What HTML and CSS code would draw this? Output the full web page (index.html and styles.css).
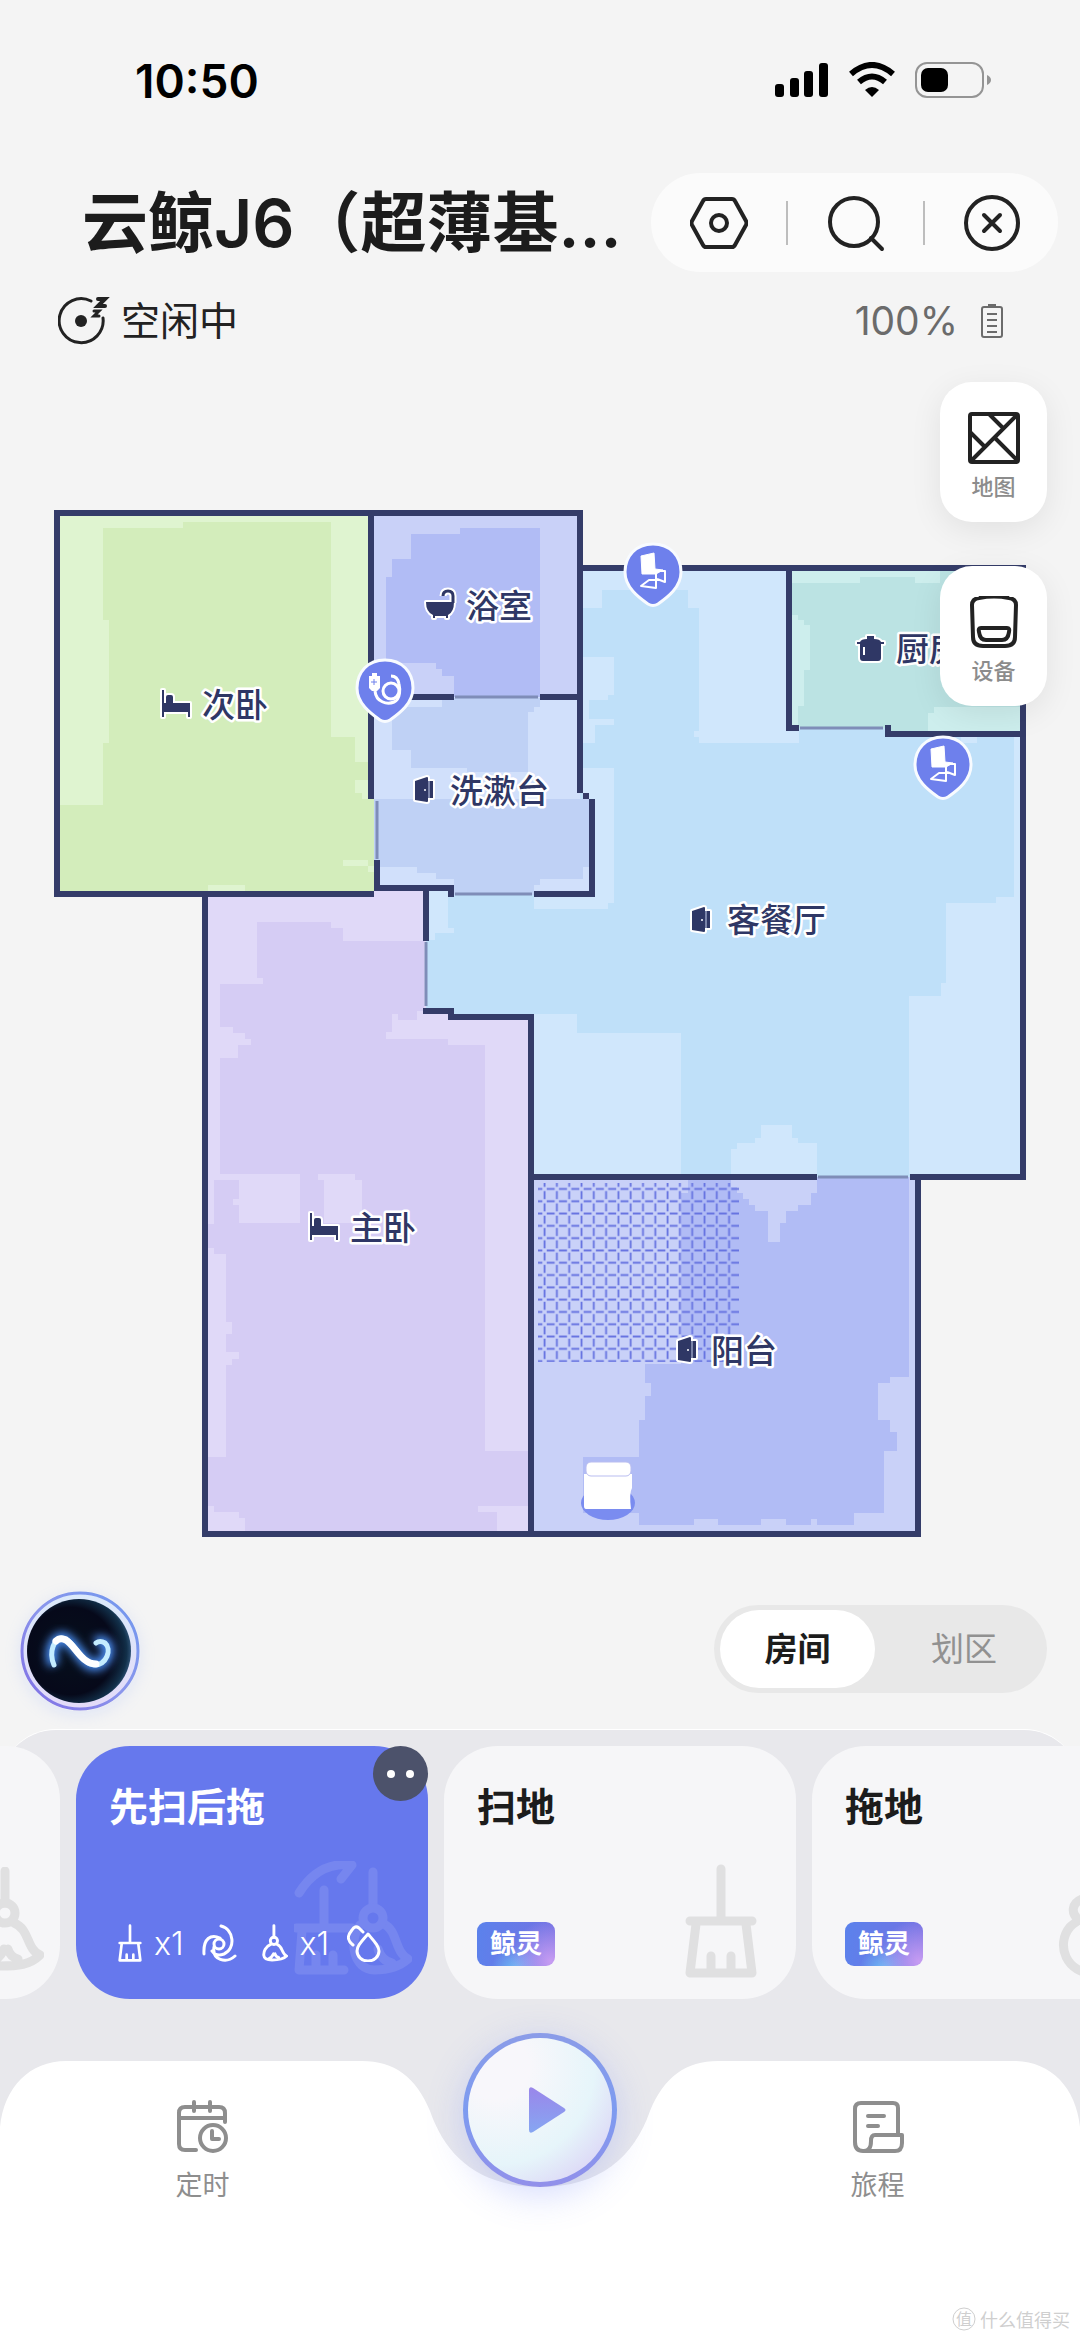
FILE: index.html
```html
<!DOCTYPE html>
<html lang="zh-CN">
<head>
<meta charset="utf-8">
<meta name="viewport" content="width=device-width, initial-scale=1">
<title>云鲸J6</title>
<link rel="stylesheet" href="styles.css">
</head>
<body>
<div class="app">
  <div class="statusbar">
    <span class="clock">10:50</span>
    <svg class="signals" width="216" height="38" viewBox="0 0 216 38" aria-hidden="true">
      <rect x="0" y="22" width="9" height="13" rx="3"/>
      <rect x="15" y="16" width="9" height="19" rx="3"/>
      <rect x="29" y="9" width="9" height="26" rx="3"/>
      <rect x="44" y="1" width="9" height="34" rx="3"/>
      <g fill="none" stroke="#000" stroke-width="6"><path d="M76 12Q97-6 118 12"/><path d="M84 20Q97 9 110 20"/></g>
      <path d="M90 28Q97 22 104 28L97 35Z"/>
      <rect x="141" y="1" width="67" height="34" rx="11" fill="none" stroke="#949494" stroke-width="2"/>
      <rect x="146" y="6" width="27" height="24" rx="7"/>
      <path d="M212 13Q216 15 216 18T212 23Z" fill="#949494"/>
    </svg>
  </div>

  <header class="header">
    <h1 class="title">云鲸J6（超薄基…</h1>
    <div class="actions">
      <button class="action" aria-label="设置"><svg width="58" height="58" viewBox="0 0 58 58"><path d="M16 5H42Q44 5 45 7L56 27Q57 29 56 31L45 51Q44 53 42 53H16Q14 53 13 51L2 31Q1 29 2 27L13 7Q14 5 16 5Z"/><circle cx="29" cy="29" r="8"/></svg></button>
      <span class="divider"></span>
      <button class="action" aria-label="搜索"><svg width="58" height="58" viewBox="0 0 58 58"><circle cx="27" cy="28" r="24"/><path d="M44 44L55 55"/></svg></button>
      <span class="divider"></span>
      <button class="action" aria-label="关闭"><svg width="58" height="58" viewBox="0 0 58 58"><circle cx="29" cy="29" r="26"/><path d="M21 21L37 37M37 21L21 37"/></svg></button>
    </div>
  </header>

  <div class="state">
    <svg width="52" height="50" viewBox="0 0 52 50" fill="none" stroke="#222" stroke-width="3" stroke-linecap="round" aria-hidden="true"><path d="M33 5A22 22 0 1 0 45 22"/><circle cx="23" cy="25" r="6" fill="#222" stroke="none"/><path d="M40 3H47L40 10H47" stroke-width="4"/><path d="M36 15H41L36 20H41" stroke-width="3"/></svg>
    <span class="state-text">空闲中</span>
    <span class="charge">100%</span>
    <svg width="24" height="36" viewBox="0 0 24 36" fill="none" stroke="#6b6b6b" stroke-width="2" aria-hidden="true"><rect x="2" y="4" width="20" height="30" rx="2"/><path d="M8 2H16M7 11H17M7 17H17M7 23H17M7 29H17"/></svg>
  </div>

  <main class="map">
    <svg class="plan" viewBox="0 346 1080 1214" role="img" aria-label="户型地图">
      <defs>
        <pattern id="carpet" x="538.4" y="1182.8" width="12.3" height="12.3" patternUnits="userSpaceOnUse">
          <path d="M0 6.2H4M8.3 6.2H12.3M6.2 0V4M6.2 8.3V12.3" stroke="#6572e0" stroke-width="1.8"/>
        </pattern>
        <path id="pin" d="M0-30C17-30 28-18 28-2C28 13 15 23 5 30Q0 33-5 30C-15 23-28 13-28-2C-28-18-17-30 0-30Z" fill="#6e80ec" stroke="#f8fbff" stroke-width="3"/>
        <g id="chair" stroke-linejoin="round"><path d="M-12-18L1-21L2-5L10-4L3 0H-11Z" fill="#fff" stroke="#fff" stroke-width="1"/><path d="M3-3H12V8L4 5M3-3V14L-12 12L-4 6H7" fill="none" stroke="#fff" stroke-width="2"/></g>
        <path id="bed" d="M0 0H2V13H4V7Q4 5 6 5H9Q11 5 11 7V13H28V27H26V22H2V27H0Z"/>
        <g id="door"><path d="M1 4L13 0Q14 0 14 1V4H19V21H14V24Q14 25 13 25L1 23Z"/><path d="M15 4V21" stroke="#c9d3f0" stroke-width="1"/><circle cx="11" cy="13" r="1" fill="#fff" stroke="none"/></g>
      </defs>

      <path fill="#dff4d0" d="M57 513H371V799H377V894H57Z"/>
      <path fill="#d3edbb" d="M103 528H183V522H331V737H355V762H368V780H355V793H362V799H374V891H60V805H103V743H109V620H103Z"/>
      <path fill="#dff4d0" d="M343 860H368V866H374V872H368V866H343ZM208 885H245V891H208Z"/>

      <path fill="#bfe0f9" d="M580 568H789V728H888V734H1023V1177H531V1017H451V1011H426V891H592V799H580Z"/>
      <path fill="#d0e7fc" d="M583 571H787V731H799V743H699V737H694V731H699V608H688V590H602V608H583ZM583 657H614V695H608V700H583ZM583 700H589V719H614V725H595V743H583ZM583 768H614V903H608V909H534V897H589V799H583ZM429 891H448V928H454V933H435V940H429ZM534 1014H577V1033H681V1174H534ZM1014 737H1020V1174H909V996H941V983H946V903H996V897H1014ZM961 737H977V743H961ZM761 1125H792V1138H798V1143H817V1174H731V1149H737V1143H755V1138H761Z"/>

      <path fill="#c9d1f8" d="M371 513H580V697H371Z"/>
      <path fill="#b1bcf5" d="M411 534H460V528H540V697H454V676H442V669H436V663H386V577H392V559H411Z"/>
      <path fill="#d1e0fb" d="M371 697H580V799H592V894H451V888H377V799H371Z"/>
      <path fill="#bfd1f5" d="M442 698H540V707H534V712H528V772H467V768H411V750H392V707H442ZM374 799H589V867H583V879H540V885H534V895H454V879H436V873H417V867H380V860H374Z"/>

      <path fill="#bbe3e3" d="M789 568H1023V734H888V728H789Z"/>
      <path fill="#cdeeed" d="M792 571H940V583H915V577H860V583H792ZM792 615H798V620H804V625H810V670H804V706H798V728H792ZM934 707H1020V731H928V713H934Z"/>

      <path fill="#e0d9f8" d="M205 894H374V891H426V1011H451V1017H531V1534H205Z"/>
      <path fill="#d5ccf4" d="M257 922H331V928H343V941H424V1011H417V1020H398V1014H392V1032H386V1039H448V1045H485V1451H528V1506H478V1512H497V1531H245V1518H239V1512H214V1506H208V1457H226V1365H232V1359H239V1352H226V1334H232V1322H226V1254H214V1248H208V1224H214V1180H220V1058H238V1045H251V1039H245V1033H233V1027H220V984H263V978H257Z"/>
      <path fill="#e0d9f8" d="M214 1174H300V1223H239V1205H233V1199H239V1180H214ZM318 1174H355V1180H362V1223H324V1180H318Z"/>

      <path fill="#c9d1f8" d="M531 1177H918V1534H531Z"/>
      <path fill="#b1bcf5" d="M688 1177H909V1377H890V1383H878V1420H890V1432H897V1451H884V1513H854V1525H817V1519H811V1525H786V1519H761V1525H718V1519H694V1525H639V1513H583V1457H639V1420H645V1396H651V1383H645V1364H681V1193H688Z"/>
      <path fill="#c9d1f8" d="M731 1177H817V1193H811V1205H798V1211H786V1223H780V1242H768V1211H755V1205H749V1199H743V1193H737V1187H731Z"/>
      <rect x="538" y="1183" width="201" height="179" fill="url(#carpet)"/>

      <g fill="none" stroke="#343c69" stroke-width="6">
        <path d="M374 894H57V513H580V793M371 513V799M371 697H454M540 697H580M586 793V799M592 799V894H534M377 860V888H451V897"/>
        <path d="M426 891V941M423 1011H451V1017H531V1534M205 894V1534H918V1177M531 1177H817M910 1177H1023V568H580M789 568V728H799M888 725V734H1023"/>
      </g>
      <path d="M455 697H538M377 801V859M455 894H532M426 942V1006M800 728H883M818 1177H908" fill="none" stroke="#7f8db8" stroke-width="3"/>

      <ellipse cx="608" cy="1503" rx="27" ry="17" fill="#7a8cf0"/>
      <path d="M584 1474H632V1488Q629 1493 631 1509H586Q584 1509 584 1506Z" fill="#fff"/>
      <rect x="586" y="1462" width="45" height="14" rx="5" fill="#fff" stroke="#b9bdf0" stroke-width="1"/>

      <g transform="translate(653 574)"><use href="#pin"/><use href="#chair"/></g>
      <g transform="translate(943 767)"><use href="#pin"/><use href="#chair"/></g>
      <g transform="translate(385 690)"><use href="#pin"/>
        <path d="M-16-14H-13V-17H-8V-14H-5V-2L-8 1H-13L-16-2Z" fill="#fff"/>
        <path d="M-10 1C-9 12 2 15 9 12C16 9 15-2 14-6C13-12 10-14 6-14" fill="none" stroke="#fff" stroke-width="3"/>
        <circle cx="6" cy="1" r="8" fill="none" stroke="#fff" stroke-width="3"/>
        <path d="M-11-11V-5M-14-8H-8" stroke="#6e80ec" stroke-width="1"/>
      </g>

      <g class="glyphs">
        <use href="#bed" x="162" y="690"/>
        <use href="#bed" x="310" y="1213"/>
        <use href="#door" x="414" y="777"/>
        <use href="#door" x="691" y="907"/>
        <use href="#door" x="677" y="1337"/>
        <g transform="translate(426 590)"><path d="M17 6Q17 1 22 1Q27 1 27 6V13" class="tap-edge"/><path d="M0 12H28Q28 22 22 25V28H20V26H9V28H7V25Q0 22 0 12Z"/><path d="M17 6Q17 1 22 1Q27 1 27 6V13" class="tap"/></g>
        <g transform="translate(857 636)"><path d="M0 6H3Q4 3 10 3V0H17V3Q23 3 24 6H27V8H24V22Q24 25 21 25H6Q3 25 3 22V8H0Z"/><path d="M6 11H8V19H6Z" fill="#fff" stroke="none"/></g>
      </g>
      <g class="names">
        <text x="202" y="717">次卧</text>
        <text x="466" y="618">浴室</text>
        <text x="450" y="803">洗漱台</text>
        <text x="727" y="932">客餐厅</text>
        <text x="896" y="661">厨房</text>
        <text x="350" y="1240">主卧</text>
        <text x="711" y="1363">阳台</text>
      </g>
    </svg>

    <div class="tools">
      <button class="tool"><svg width="52" height="52" viewBox="0 0 52 52"><rect x="2" y="2" width="48" height="48" rx="2"/><path d="M3 49L49 3M22 3L35 16M2 20L17 35M27 26L49 48"/></svg>地图</button>
      <button class="tool"><svg width="52" height="52" viewBox="0 0 52 52"><path d="M11 2Q26-1 41 2Q48 3 48 9L47 41Q47 50 37 50H15Q5 50 5 41L4 9Q4 3 11 2Z"/><path d="M13 32H39Q42 32 41 36Q40 44 34 44H18Q12 44 11 36Q10 32 13 32Z"/></svg>设备</button>
    </div>
  </main>

  <section class="controls">
    <button class="orb" aria-label="智能助手">
      <svg width="120" height="120" viewBox="0 0 120 120">
        <defs>
          <linearGradient id="rim" x1="0" y1="1" x2="1" y2="0"><stop offset="0" stop-color="#7f6ce4"/><stop offset=".5" stop-color="#8b96ec"/><stop offset="1" stop-color="#6f97ee"/></linearGradient>
          <linearGradient id="halo" x1="0" y1="1" x2="0" y2="0"><stop offset="0" stop-color="#e3daf8"/><stop offset="1" stop-color="#dbeafb"/></linearGradient>
          <radialGradient id="space" cx=".42" cy=".5" r=".6"><stop offset="0" stop-color="#06101c"/><stop offset=".7" stop-color="#06091a"/><stop offset=".9" stop-color="#12304a"/><stop offset="1" stop-color="#3a5f86"/></radialGradient>
          <filter id="glow" x="-50%" y="-50%" width="200%" height="200%"><feGaussianBlur stdDeviation="4"/></filter>
        </defs>
        <circle cx="60" cy="60" r="58" fill="url(#halo)" stroke="url(#rim)" stroke-width="3"/>
        <circle cx="59" cy="60" r="52" fill="url(#space)"/>
        <path d="M34 74C28 60 35 47 42 47C54 48 62 74 74 74C87 74 92 58 85 52Q80 49 76 52" fill="none" stroke="#4a8cf0" stroke-width="12" filter="url(#glow)"/>
        <path d="M34 74C28 60 35 47 42 47C54 48 62 74 74 74C87 74 92 58 85 52Q80 49 76 52" fill="none" stroke="#c4ecff" stroke-width="5" stroke-linecap="round"/>
        <path d="M36 50Q40 46 46 49C56 56 62 73 76 73" fill="none" stroke="#fff" stroke-width="7" stroke-linecap="round"/>
      </svg>
    </button>
    <div class="segment">
      <button class="segment-item is-active" aria-pressed="true">房间</button>
      <button class="segment-item" aria-pressed="false">划区</button>
    </div>
  </section>

  <section class="dock">
    <svg class="symbols" aria-hidden="true">
      <symbol id="broom" viewBox="0 0 72 114"><path d="M36 5V56M5 57H67M11 60L5 109H67L61 60M26 109V92M46 109V92"/></symbol>
      <symbol id="mop" viewBox="0 0 72 104"><path d="M33 4V36"/><circle cx="33" cy="46" r="10"/><path d="M24 56C10 62 4 76 5 86C6 97 16 99 28 99C46 99 58 98 68 88C54 82 58 62 42 56M16 98Q28 92 32 82M36 82Q38 90 46 92"/></symbol>
    </svg>
    <div class="modes">
      <article class="mode">
        <svg class="mark mark-mop" width="72" height="104"><use href="#mop"/></svg>
      </article>
      <article class="mode is-selected">
        <h2 class="mode-name">先扫后拖</h2>
        <svg class="mark mark-both" width="118" height="114" viewBox="0 0 118 114"><path d="M5 32Q25 0 58 4L47 18M30 29V64M2 67H58M8 70L5 109H50M22 109V94M39 109V94M79 11V45M66 64C54 82 60 108 80 109Q102 109 114 98C100 90 104 70 90 63M84 88Q88 100 98 102"/><circle cx="79" cy="57" r="10"/></svg>
        <div class="steps">
          <svg class="line" width="24" height="38"><use href="#broom"/></svg><span>x1</span>
          <svg class="thin fan" width="36" height="38" viewBox="0 0 36 38"><circle cx="17" cy="20" r="5"/><path d="M19 2C32 5 34 25 22 30Q14 33 10 27M2 30C1 14 9 10 18 14M33 32C24 40 10 36 12 23"/></svg>
          <svg class="line" width="26" height="38"><use href="#mop"/></svg><span>x1</span>
          <svg class="thin drops" width="34" height="38" viewBox="0 0 34 38"><path d="M21 10C14 18 10 22 10 27A11 10 0 0 0 32 27C32 22 27 17 21 10ZM6 21C0 16 0 12 5 6Q8 1 12 4L16 8"/></svg>
        </div>
        <button class="more" aria-label="更多"><i></i><i></i></button>
      </article>
      <article class="mode">
        <h2 class="mode-name">扫地</h2>
        <span class="tag">鲸灵</span>
        <svg class="mark mark-broom" width="72" height="114"><use href="#broom"/></svg>
      </article>
      <article class="mode">
        <h2 class="mode-name">拖地</h2>
        <span class="tag">鲸灵</span>
        <svg class="mark mark-drop" width="108" height="84" viewBox="0 0 108 84"><path d="M36 78A28 28 0 0 1 14 32C18 28 22 26 23 25C14 18 16 8 26 4C36 0 50 10 52 20M56 20C46 34 38 44 38 56A24 24 0 0 0 84 56C84 44 74 32 56 20Z"/></svg>
      </article>
    </div>

    <nav class="nav">
      <svg class="nav-shape" viewBox="0 0 1080 280" preserveAspectRatio="none" aria-hidden="true"><path fill="#fff" d="M0 66C4 26 30 0 66 0H362C394 0 416 16 430 50C446 96 480 126 540 126C600 126 634 96 650 50C664 16 686 0 718 0H1014C1050 0 1076 26 1080 66V280H0Z"/></svg>
      <a class="nav-item" href="#timer"><svg width="54" height="54" viewBox="0 0 54 54"><path d="M20 50H9Q3 50 3 44V13Q3 7 9 7H43Q49 7 49 13V22M3 18H49M18 2V11M34 2V11"/><circle cx="37" cy="38" r="13"/><path d="M36 31V39H43"/></svg>定时</a>
      <button class="play" aria-label="开始">
        <svg width="48" height="56" viewBox="0 0 48 56"><defs><linearGradient id="tri" x1="0" y1="0" x2="0" y2="1"><stop offset="0" stop-color="#9a86ea"/><stop offset="1" stop-color="#86a6f2"/></linearGradient></defs><path d="M8 8Q8 4 12 6L43 26Q46 28 43 30L12 50Q8 52 8 48Z" fill="url(#tri)"/></svg>
      </button>
      <a class="nav-item" href="#journey"><svg width="54" height="54" viewBox="0 0 54 54"><path d="M47 34V8Q47 3 42 3H10Q4 3 4 9V42Q4 51 12 51H44Q51 51 51 43V35H24Q20 35 20 41Q20 51 13 51M17 16H33M17 26H27"/></svg>旅程</a>
    </nav>
    <footer class="credit"><svg width="24" height="24" viewBox="0 0 24 24" aria-hidden="true"><circle cx="12" cy="12" r="11" fill="none" stroke="#cfcfcf" stroke-width="1"/><text x="4" y="18">值</text></svg>什么值得买</footer>
  </section>
</div>
</body>
</html>
```
FILE: styles.css
```css
* { box-sizing: border-box; }

body {
  margin: 0;
  background: #f4f4f4;
  color: #1c1c1c;
  font-family: Inter, "Noto Sans CJK SC", sans-serif;
}

h1, h2 { margin: 0; }

button {
  padding: 0;
  border: 0;
  background: none;
  color: inherit;
  font: inherit;
  cursor: pointer;
}

svg { display: block; flex: none; }

.app {
  display: flex;
  flex-direction: column;
  min-height: 100vh;
  overflow: hidden;
}

/* status bar */
.statusbar {
  display: flex;
  align-items: center;
  justify-content: space-between;
  padding: 50px 89px 0 135px;
  height: 111px;
  color: #000;
}

.clock { font-size: 46px; font-weight: 600; line-height: 60px; }

/* header */
.header {
  display: flex;
  align-items: center;
  justify-content: space-between;
  margin-top: 62px;
  padding: 0 22px 0 82px;
}

.title {
  font-size: 66px;
  font-weight: 600;
  line-height: 96px;
  white-space: nowrap;
}

.actions {
  display: flex;
  align-items: center;
  justify-content: space-between;
  width: 407px;
  height: 99px;
  padding: 0 37px 0 39px;
  border-radius: 50px;
  background: #fbfbfb;
}

.action svg {
  fill: none;
  stroke: #222;
  stroke-width: 4;
  stroke-linecap: round;
}

.divider { width: 2px; height: 44px; background: #bdbdbd; }

/* device state */
.state {
  display: flex;
  align-items: center;
  padding: 0 76px 0 58px;
  margin-top: 24px;
  height: 50px;
  font-size: 39px;
  line-height: 50px;
}

.state-text { margin-left: 11px; color: #222; }
.charge { margin: 0 22px 0 auto; color: #6b6b6b; }

/* map */
.map { position: relative; }
.plan { width: 100%; height: auto; }

.names text {
  fill: #2f3765;
  stroke: #fff;
  stroke-width: 5px;
  stroke-linejoin: round;
  paint-order: stroke;
  font-size: 33px;
  font-weight: 500;
}

.glyphs {
  fill: #2f3765;
  stroke: #fff;
  stroke-width: 4px;
  stroke-linejoin: round;
  paint-order: stroke;
}

.glyphs .tap { fill: none; stroke: #2f3765; stroke-width: 3px; }
.glyphs .tap-edge { fill: none; stroke-width: 7px; }

.tools {
  position: absolute;
  top: 36px;
  right: 33px;
  display: flex;
  flex-direction: column;
  gap: 44px;
}

.tool {
  display: flex;
  flex-direction: column;
  align-items: center;
  gap: 7px;
  width: 107px;
  height: 140px;
  padding-top: 30px;
  border-radius: 32px;
  background: #fff;
  box-shadow: 0 8px 32px rgba(0, 0, 0, .08);
  color: #8c8c8c;
  font-size: 22px;
  font-weight: 500;
  line-height: 32px;
}

.tool svg { fill: none; stroke: #222; stroke-width: 4; stroke-linecap: round; stroke-linejoin: round; }

/* assistant and area switch */
.controls {
  display: flex;
  align-items: flex-start;
  justify-content: space-between;
  padding: 31px 33px 0 20px;
}

.orb { border-radius: 50%; box-shadow: 0 4px 16px rgba(140, 170, 255, .2); }

.segment {
  display: flex;
  width: 333px;
  height: 88px;
  margin-top: 14px;
  padding: 5px 6px;
  border-radius: 44px;
  background: #e8e8e8;
}

.segment-item {
  flex: 1;
  padding-left: 12px;
  border-radius: 39px;
  color: #919191;
  font-size: 33px;
  line-height: 76px;
}

.segment-item.is-active {
  flex: 0 0 155px;
  padding: 0;
  background: #fff;
  color: #1c1c1c;
  font-weight: 700;
}

/* mode cards */
.dock {
  flex: 1;
  display: flex;
  flex-direction: column;
  margin-top: 18px;
  border-radius: 56px 56px 0 0;
  border-top: 1px solid #fff;
  background: linear-gradient(#e8e8ec 0, #e8e8ec 480px, #fff 480px);
}

.symbols { position: absolute; width: 0; height: 0; }

.modes {
  display: flex;
  gap: 16px;
  margin-left: -292px;
  padding: 16px 0 62px;
}

.mode {
  position: relative;
  flex: 0 0 352px;
  height: 253px;
  padding: 33px;
  border-radius: 54px;
  background: #f6f6f8;
}

.mode.is-selected { background: #6678ed; color: #fff; }

.mode-name { font-size: 39px; font-weight: 700; line-height: 56px; }

.mark { position: absolute; fill: none; stroke: #e0e0e1; stroke-width: 9; stroke-linecap: round; stroke-linejoin: round; }
.mark-mop { right: 16px; bottom: 28px; }
.mark-broom { right: 39px; bottom: 21px; }
.mark-drop { right: 0; bottom: 20px; }
.mark-both { right: 16px; bottom: 24px; stroke: #7686ef; }

.steps {
  position: relative;
  display: flex;
  align-items: center;
  gap: 12px;
  margin: 86px 0 0 9px;
  height: 44px;
  font-size: 32px;
  font-weight: 300;
}

.steps svg { fill: none; stroke: #fff; stroke-linecap: round; stroke-linejoin: round; }
.steps .line { stroke-width: 8; }
.steps .thin { stroke-width: 3; }
.fan { margin: 0 12px 0 6px; }
.drops { margin-left: 6px; }

.more {
  position: absolute;
  top: 0;
  right: 0;
  display: flex;
  align-items: center;
  justify-content: center;
  gap: 11px;
  width: 55px;
  height: 55px;
  border-radius: 50%;
  background: #4c526b;
}

.more i { width: 8px; height: 8px; border-radius: 50%; background: #fff; }

.tag {
  display: block;
  width: 78px;
  height: 44px;
  margin-top: 87px;
  border-radius: 9px;
  background:
    radial-gradient(circle at 95% 90%, #c79cf2 0, rgba(160, 130, 240, 0) 50%),
    radial-gradient(circle at 50% 110%, #6cc0f5 0, rgba(108, 150, 240, 0) 40%),
    linear-gradient(100deg, #5b82ec, #7571e2);
  color: #fff;
  font-size: 26px;
  font-weight: 700;
  line-height: 44px;
  text-align: center;
}

/* bottom navigation */
.nav {
  position: relative;
  display: grid;
  grid-template-columns: 3fr 2fr 3fr;
  justify-items: center;
  align-items: start;
  height: 230px;
}

.nav-shape { position: absolute; top: 0; left: 0; width: 100%; height: 280px; }

.nav-item {
  position: relative;
  display: flex;
  flex-direction: column;
  align-items: center;
  gap: 12px;
  padding-top: 39px;
  color: #8e8e8e;
  font-size: 27px;
  line-height: 40px;
  text-decoration: none;
}

.nav-item svg { fill: none; stroke: #8e8e8e; stroke-width: 4; stroke-linecap: round; stroke-linejoin: round; }

.play {
  position: relative;
  display: flex;
  align-items: center;
  justify-content: center;
  width: 154px;
  height: 154px;
  margin-top: -28px;
  padding-left: 10px;
  border: 5px solid transparent;
  border-radius: 50%;
  background:
    radial-gradient(circle at 20% 20%, #f8f7fb 20%, #e6f5fa 60%, #dcd6f6 86%) padding-box,
    linear-gradient(#8b9ce8, #7d9bf0 50%, #9290ea) border-box;
  box-shadow: 0 8px 36px rgba(120, 140, 250, .3);
}

.credit {
  position: relative;
  display: flex;
  justify-content: flex-end;
  align-items: center;
  gap: 4px;
  padding: 5px 10px 0 0;
  height: 50px;
  color: #cfcfcf;
  font-size: 18px;
}

.credit text { fill: #cfcfcf; font-size: 16px; }
```
